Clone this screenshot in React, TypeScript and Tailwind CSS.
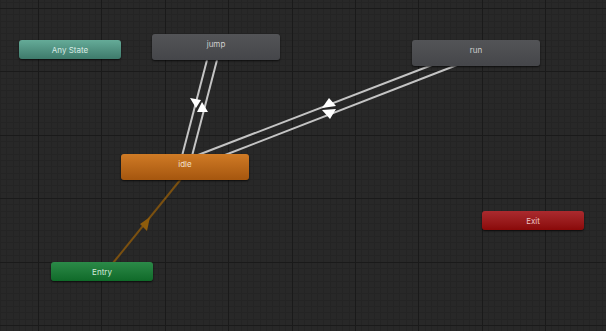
const W = 606;
const H = 331;
const STEP = 6.3375;

type Node = {
  label: string;
  left: number;
  top: number;
  w: number;
  h: number;
  cls: string;
};

const nodes: Node[] = [
  { label: 'Any State', left: 19, top: 40, w: 102, h: 19, cls: 'from-[#65ab98] to-[#3e7a6b] text-[#d9ebe4]' },
  { label: 'jump', left: 152, top: 34, w: 128, h: 26, cls: 'from-[#535457] to-[#45464a] text-[#cfcfcf]' },
  { label: 'run', left: 412, top: 40, w: 128, h: 26, cls: 'from-[#535457] to-[#45464a] text-[#cfcfcf]' },
  { label: 'idle', left: 121, top: 154, w: 128, h: 26, cls: 'from-[#d07b25] to-[#a5560e] text-[#f3e0cc]' },
  { label: 'Entry', left: 51, top: 262, w: 102, h: 19, cls: 'from-[#2b8a48] to-[#0f6a29] text-[#d2ead9]' },
  { label: 'Exit', left: 482, top: 211, w: 102, h: 19, cls: 'from-[#aa2a2e] to-[#8a0808] text-[#ecc2c2]' },
];

function Grid() {
  const vx: { x: number; major: boolean }[] = [];
  for (let k = -6; 38 + k * STEP < W; k++) {
    vx.push({ x: Math.round(38 + k * STEP), major: ((k % 10) + 10) % 10 === 0 });
  }
  const hy: { y: number; major: boolean }[] = [];
  for (let k = -1; 8 + k * STEP < H; k++) {
    hy.push({ y: Math.round(8 + k * STEP), major: ((k % 10) + 10) % 10 === 0 });
  }
  return (
    <svg className="absolute inset-0" width={W} height={H} shapeRendering="crispEdges">
      {vx.filter((l) => !l.major).map((l) => (
        <rect key={'v' + l.x} x={l.x} y={0} width={1} height={H} fill="#242424" />
      ))}
      {hy.filter((l) => !l.major).map((l) => (
        <rect key={'h' + l.y} x={0} y={l.y} width={W} height={1} fill="#242424" />
      ))}
      {vx.filter((l) => l.major).map((l) => (
        <rect key={'V' + l.x} x={l.x} y={0} width={1} height={H} fill="#1a1a1a" />
      ))}
      {hy.filter((l) => l.major).map((l) => (
        <rect key={'H' + l.y} x={0} y={l.y} width={W} height={1} fill="#1a1a1a" />
      ))}
    </svg>
  );
}

function Transitions() {
  return (
    <svg className="absolute inset-0" width={W} height={H}>
      {/* idle <-> jump */}
      <line x1={207} y1={60} x2={182} y2={156} stroke="#c4c4c4" strokeWidth={2} />
      <line x1={217} y1={60} x2={192} y2={156} stroke="#c4c4c4" strokeWidth={2} />
      <polygon points="190,98 201,100 196,108" fill="#ffffff" />
      <polygon points="202,102 197,112 208,112" fill="#ffffff" />
      {/* idle <-> run */}
      <line x1={198} y1={155} x2={432} y2={65} stroke="#c4c4c4" strokeWidth={2} />
      <line x1={225} y1={155} x2={457} y2={65} stroke="#c4c4c4" strokeWidth={2} />
      <polygon points="329,98 322,108 336,106" fill="#ffffff" />
      <polygon points="322,110 336,109 330,119" fill="#ffffff" />
      {/* entry -> idle */}
      <line x1={113} y1={263} x2={181} y2={179} stroke="#7a5010" strokeWidth={2} />
      <polygon points="150,217 140,224 147,231" fill="#8f5d0c" />
    </svg>
  );
}

export default function App() {
  return (
    <div className="relative w-[606px] h-[331px] overflow-hidden bg-[#282828] font-['Inter','Liberation_Sans',sans-serif]">
      <Grid />
      <Transitions />
      {nodes.map((n) => (
        <div
          key={n.label}
          className={`absolute rounded-[3px] bg-linear-to-b shadow-[0_1px_2px_rgba(0,0,0,0.7)] ${n.cls}`}
          style={{ left: n.left, top: n.top, width: n.w, height: n.h }}
        >
          <div className="h-[19px] flex items-center justify-center text-[8px] leading-none">{n.label}</div>
        </div>
      ))}
    </div>
  );
}
